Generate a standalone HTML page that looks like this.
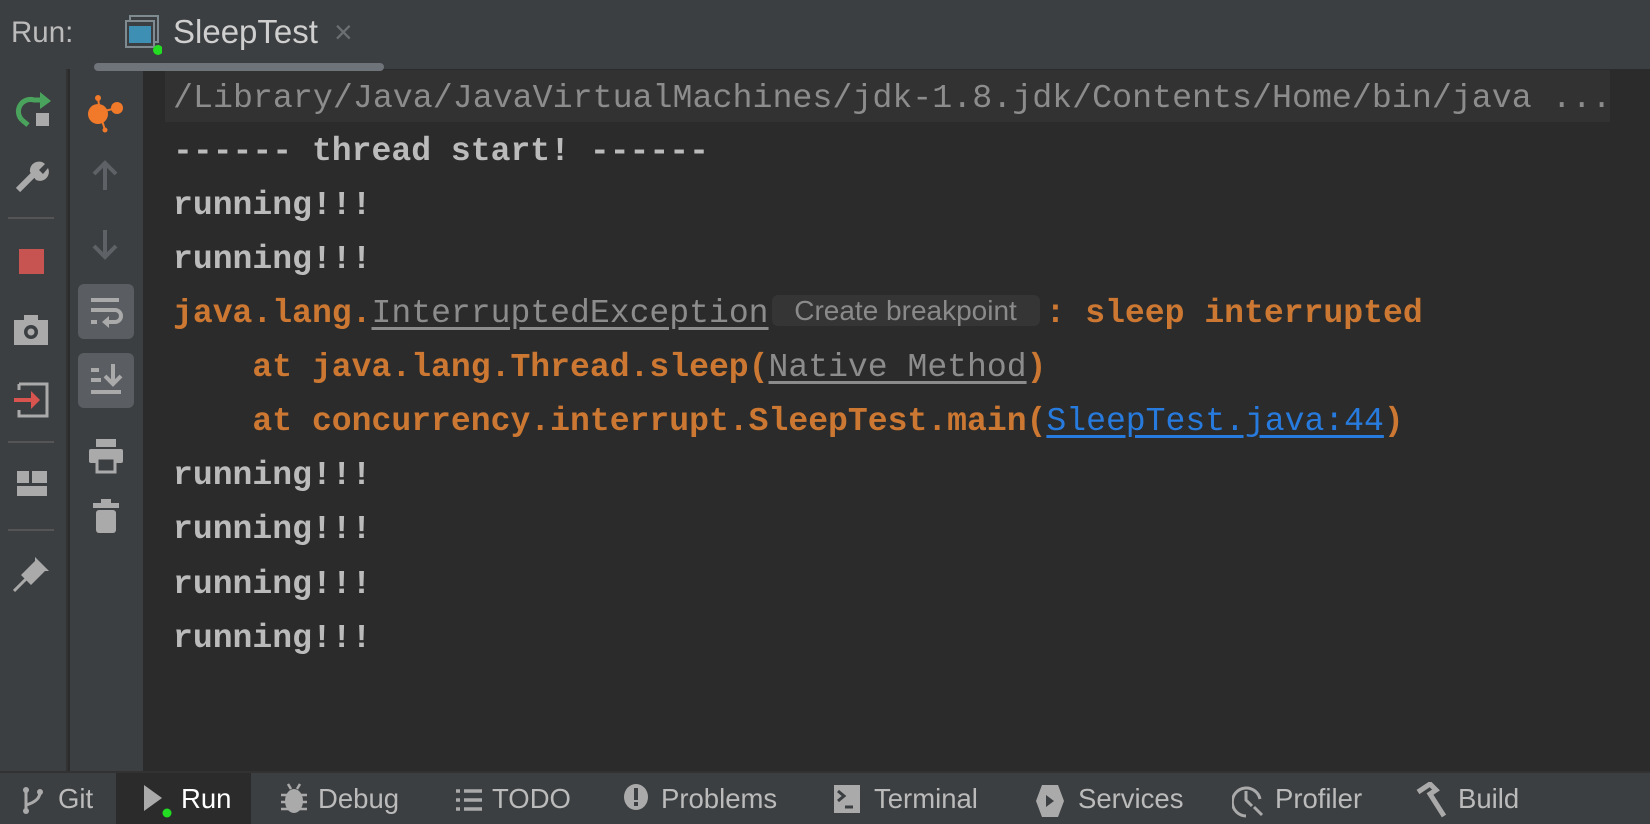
<!DOCTYPE html>
<html><head><meta charset="utf-8"><style>
*{margin:0;padding:0;box-sizing:border-box}
body{width:1650px;height:824px;background:#2b2b2b;overflow:hidden;position:relative;font-family:"Liberation Sans",sans-serif}
.top{position:absolute;left:0;top:0;width:1650px;height:69px;background:#3c3f41}
.abs{position:absolute}
.strip1{position:absolute;left:0;top:69px;width:68px;height:702px;background:#3c3f41;border-right:2px solid #323232}
.strip2{position:absolute;left:70px;top:69px;width:73px;height:702px;background:#3c3f41}
.bottom{position:absolute;left:0;top:771px;width:1650px;height:53px;background:#3c3f41;border-top:2px solid #323232}
.ln{position:absolute;left:173px;height:54px;line-height:54px;font-family:"Liberation Mono",monospace;font-size:33.1px;font-weight:bold;color:#bbbbbb;white-space:pre}
.o{color:#cc7832}
.u{color:#8c8c8c;text-decoration:underline;text-underline-offset:5px;font-weight:normal}
.lk{color:#287bde;text-decoration:underline;text-underline-offset:5px;font-weight:normal}
.pill{display:inline-block;vertical-align:middle;width:268px;height:31px;margin:0 6px 0 3px;background:#353535;border-radius:6px;font-family:"Liberation Sans",sans-serif;font-weight:normal;font-size:28px;line-height:31px;color:#8a8a8a;text-align:center;position:relative;top:-3px;overflow:hidden}
.bt{position:absolute;top:783px;font-size:27.5px;color:#bbbbbb;line-height:32px}
.sel{position:absolute;border-radius:6px;background:#5a5e62}
</style></head><body>
<div class="top"></div>
<div class="abs" style="left:11px;top:16px;font-size:29.5px;color:#bbbbbb">Run:</div>
<svg class="abs" style="left:124px;top:15px" width="38" height="40" viewBox="0 0 38 40">
<rect x="6" y="1" width="28" height="26" fill="none" stroke="#7f8b91" stroke-width="2"/>
<rect x="2" y="6" width="28" height="26" fill="#3c3f41" stroke="#7f8b91" stroke-width="2"/>
<rect x="5" y="11" width="22" height="17" fill="#3d8fb4"/>
<circle cx="34" cy="35" r="5" fill="#22dd22"/></svg>
<div class="abs" style="left:173px;top:13px;font-size:33px;color:#cfcfcf">SleepTest</div>
<div class="abs" style="left:334px;top:14px;font-size:32px;color:#6b6f73">×</div>
<div class="abs" style="left:94px;top:63px;width:290px;height:8px;border-radius:4px;background:#6f737a;z-index:2"></div>

<div class="strip1"></div><div class="strip2"></div>
<div class="abs" style="left:8px;top:217px;width:46px;height:2px;background:#555"></div>
<div class="abs" style="left:8px;top:441px;width:46px;height:2px;background:#555"></div>
<div class="abs" style="left:8px;top:529px;width:46px;height:2px;background:#555"></div>
<svg class="abs" style="left:14px;top:90px" width="40" height="40" viewBox="0 0 40 40"><path d="M8 30 A12 12 0 0 1 20 10 L28 10" fill="none" stroke="#4aa35d" stroke-width="5"/><path d="M26 2 L37 11 L26 19Z" fill="#4aa35d"/><path d="M8 30 L14 35" stroke="#4aa35d" stroke-width="5"/><rect x="22" y="23" width="13" height="13" fill="#aaa"/></svg>
<svg class="abs" style="left:14px;top:158px" width="36" height="36" viewBox="0 0 36 36"><path d="M4 32 L20 16" stroke="#aaa" stroke-width="6"/><path d="M16 14 A9 9 0 0 1 31 6 L25 12 L29 16 L34 10 A9 9 0 0 1 22 22Z" fill="#aaa"/></svg>
<div class="abs" style="left:19px;top:249px;width:25px;height:25px;background:#c75450"></div>
<svg class="abs" style="left:13px;top:314px" width="36" height="32" viewBox="0 0 36 32"><rect x="1" y="6" width="34" height="25" fill="#aaa"/><rect x="11" y="1" width="14" height="7" fill="#aaa"/><circle cx="18" cy="18" r="7" fill="#3c3f41"/><circle cx="18" cy="18" r="3.5" fill="#aaa"/></svg>
<svg class="abs" style="left:13px;top:380px" width="38" height="38" viewBox="0 0 38 38"><path d="M6 4 H34 V36 H6 V30" fill="none" stroke="#aaa" stroke-width="3"/><path d="M6 10 V4" stroke="#aaa" stroke-width="3"/><path d="M1 18 H18 V11 L27 20 L18 29 V22 H1Z" fill="#d9534f"/></svg>
<svg class="abs" style="left:16px;top:470px" width="32" height="28" viewBox="0 0 32 28"><rect x="1" y="1" width="12" height="12" fill="#aaa"/><rect x="16" y="1" width="15" height="12" fill="#aaa"/><rect x="1" y="16" width="30" height="10" fill="#aaa"/></svg>
<svg class="abs" style="left:13px;top:555px" width="38" height="38" viewBox="0 0 38 38"><path d="M1 36 L16 21" stroke="#aaa" stroke-width="3"/><path d="M8 20 L22 6 L22 2 L36 16 L32 16 L18 30 Z" fill="#aaa"/></svg>
<svg class="abs" style="left:85px;top:94px" width="40" height="40" viewBox="0 0 40 40"><circle cx="13" cy="20" r="10" fill="#f0792a"/><circle cx="32" cy="14" r="6" fill="#f0792a"/><circle cx="13" cy="4" r="3" fill="#f0792a"/><circle cx="20" cy="36" r="2.5" fill="#f0792a"/><path d="M13 4 L15 18 L32 14 M15 20 L20 36" stroke="#f0792a" stroke-width="2" fill="none"/></svg>
<svg class="abs" style="left:90px;top:160px" width="30" height="32" viewBox="0 0 30 32"><path d="M15 30 V3 M4 14 L15 3 L26 14" fill="none" stroke="#5e6266" stroke-width="4"/></svg>
<svg class="abs" style="left:90px;top:228px" width="30" height="32" viewBox="0 0 30 32"><path d="M15 2 V29 M4 18 L15 29 L26 18" fill="none" stroke="#5e6266" stroke-width="4"/></svg>
<div class="sel" style="left:78px;top:284px;width:56px;height:55px"></div>
<svg class="abs" style="left:89px;top:296px" width="36" height="34" viewBox="0 0 36 34"><path d="M2 4 H30 M2 14 H26 A6 6 0 0 1 26 26 H16 M2 26 H8" fill="none" stroke="#aaa" stroke-width="4"/><path d="M20 20 L13 26 L20 32Z" fill="#aaa"/></svg>
<div class="sel" style="left:78px;top:353px;width:56px;height:55px"></div>
<svg class="abs" style="left:89px;top:362px" width="36" height="34" viewBox="0 0 36 34"><path d="M2 8 H10 M2 18 H12 M2 30 H32 M24 2 V20 M16 14 L24 22 L32 14" fill="none" stroke="#aaa" stroke-width="4"/></svg>
<svg class="abs" style="left:88px;top:438px" width="36" height="36" viewBox="0 0 36 36"><rect x="8" y="1" width="20" height="8" fill="#aaa"/><rect x="1" y="11" width="34" height="14" rx="2" fill="#aaa"/><rect x="9" y="20" width="18" height="14" fill="#3c3f41" stroke="#aaa" stroke-width="3"/></svg>
<svg class="abs" style="left:92px;top:498px" width="28" height="36" viewBox="0 0 28 36"><rect x="9" y="1" width="10" height="4" fill="#aaa"/><rect x="1" y="5" width="26" height="5" fill="#aaa"/><rect x="4" y="12" width="20" height="23" rx="3" fill="#aaa"/></svg>

<div class="abs" style="left:165px;top:70px;width:1445px;height:52px;background:#323232"></div>
<div class="ln" style="top:71px;color:#8c8c8c;font-weight:normal;font-size:33.3px">/Library/Java/JavaVirtualMachines/jdk-1.8.jdk/Contents/Home/bin/java ...</div>
<div class="ln" style="top:124px">------ thread start! ------</div>
<div class="ln" style="top:178px">running!!!</div>
<div class="ln" style="top:232px">running!!!</div>
<div class="ln o" style="top:286px">java.lang.<span class="u">InterruptedException</span><span class="pill">Create breakpoint</span>: sleep interrupted</div>
<div class="ln o" style="top:340px">    at java.lang.Thread.sleep(<span class="u">Native Method</span>)</div>
<div class="ln o" style="top:394px">    at concurrency.interrupt.SleepTest.main(<span class="lk">SleepTest.java:44</span>)</div>
<div class="ln" style="top:448px">running!!!</div>
<div class="ln" style="top:502px">running!!!</div>
<div class="ln" style="top:557px">running!!!</div>
<div class="ln" style="top:611px">running!!!</div>

<div class="bottom"></div>
<div class="abs" style="left:116px;top:773px;width:135px;height:51px;background:#2b2b2b"></div>
<svg class="abs" style="left:21px;top:785px" width="24" height="30" viewBox="0 0 24 30"><circle cx="5" cy="5" r="3" fill="#aaa"/><circle cx="5" cy="26" r="3" fill="#aaa"/><circle cx="19" cy="7" r="3" fill="#aaa"/><path d="M5 5 V26 M19 7 Q19 16 5 20" stroke="#aaa" stroke-width="3" fill="none"/></svg>
<div class="bt" style="left:58px">Git</div>
<svg class="abs" style="left:143px;top:784px" width="30" height="34" viewBox="0 0 30 34"><path d="M1 1 L19 14 L1 27Z" fill="#aaa"/><circle cx="24" cy="29" r="4.5" fill="#22dd22"/></svg>
<div class="bt" style="left:181px;color:#fff">Run</div>
<svg class="abs" style="left:280px;top:783px" width="28" height="32" viewBox="0 0 28 32"><path d="M8 1 L11 6 M20 1 L17 6" stroke="#aaa" stroke-width="2.5"/><ellipse cx="14" cy="18" rx="9" ry="12" fill="#aaa"/><path d="M1 12 H27 M1 19 H27 M1 26 H27" stroke="#aaa" stroke-width="2.5"/></svg>
<div class="bt" style="left:318px">Debug</div>
<svg class="abs" style="left:455px;top:788px" width="28" height="24" viewBox="0 0 28 24"><path d="M1 3 H5 M9 3 H27 M1 12 H5 M9 12 H27 M1 21 H5 M9 21 H27" stroke="#aaa" stroke-width="3.5"/></svg>
<div class="bt" style="left:492px">TODO</div>
<svg class="abs" style="left:623px;top:783px" width="28" height="30" viewBox="0 0 28 30"><ellipse cx="13" cy="14" rx="12" ry="13" fill="#aaa"/><rect x="11" y="5" width="4" height="12" fill="#3c3f41"/><rect x="11" y="19" width="4" height="4" fill="#3c3f41"/></svg>
<div class="bt" style="left:661px">Problems</div>
<svg class="abs" style="left:833px;top:784px" width="28" height="30" viewBox="0 0 28 30"><rect x="1" y="1" width="26" height="28" fill="#aaa"/><path d="M5 7 L11 12 L5 17" stroke="#3c3f41" stroke-width="3" fill="none"/><path d="M12 23 H20" stroke="#3c3f41" stroke-width="3"/></svg>
<div class="bt" style="left:874px">Terminal</div>
<svg class="abs" style="left:1035px;top:784px" width="30" height="34" viewBox="0 0 30 34"><path d="M7 1 H23 L29 17 L23 33 H7 L1 17Z" fill="#aaa"/><path d="M11 11 L19 17 L11 23Z" fill="#3c3f41"/></svg>
<div class="bt" style="left:1078px">Services</div>
<svg class="abs" style="left:1232px;top:781px" width="32" height="38" viewBox="0 0 32 38"><path d="M14 35 A14 14 0 1 1 28 18" fill="none" stroke="#aaa" stroke-width="3"/><path d="M14 10 V19 L20 25" stroke="#aaa" stroke-width="3" fill="none"/><path d="M22 26 L30 34" stroke="#aaa" stroke-width="3"/></svg>
<div class="bt" style="left:1275px">Profiler</div>
<svg class="abs" style="left:1416px;top:782px" width="32" height="36" viewBox="0 0 32 36"><path d="M2 10 L14 2 L20 8 L14 12 L28 34" stroke="#aaa" stroke-width="5" fill="none"/></svg>
<div class="bt" style="left:1458px">Build</div>
</body></html>
